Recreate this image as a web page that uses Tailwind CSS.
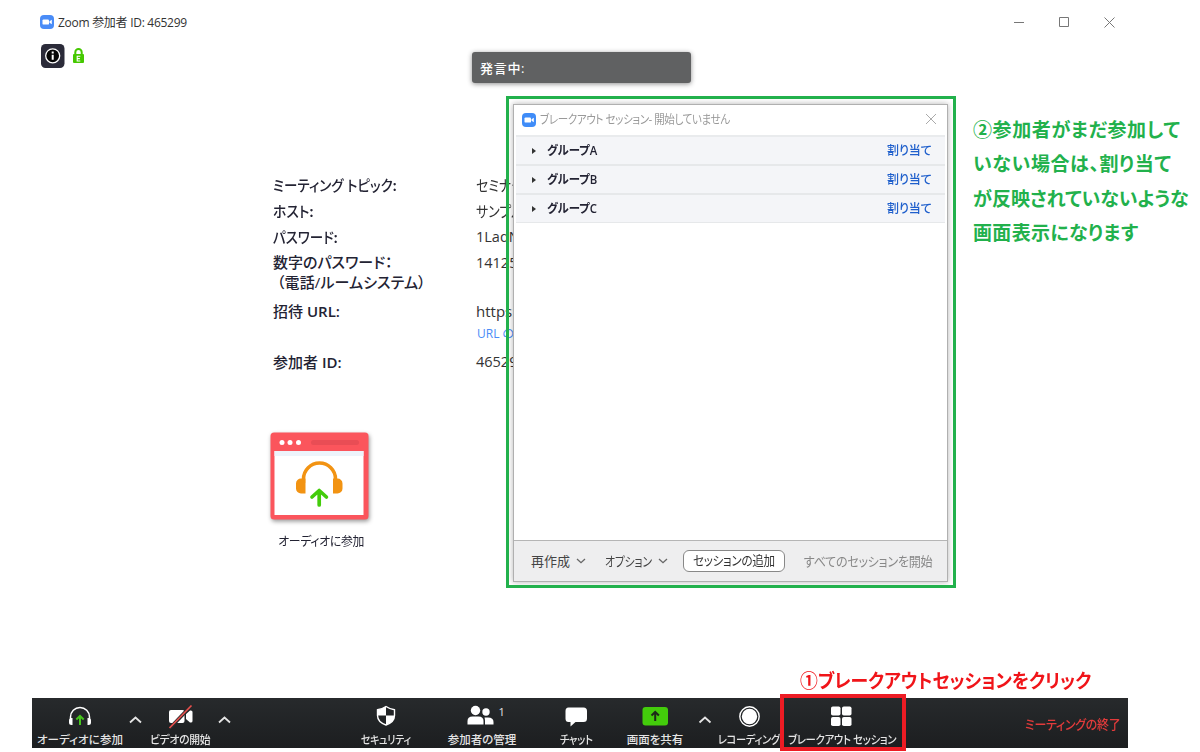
<!DOCTYPE html>
<html lang="ja">

<head>
  <meta charset="UTF-8">
  <meta name="viewport" content="width=device-width, initial-scale=1.0">
  <title>Zoom 参加者 ID: 465299</title>
  <script src="https://cdn.jsdelivr.net/npm/@tailwindcss/browser@4"></script>
</head>

<body class="relative flex h-[752px] w-[1200px] flex-col overflow-hidden bg-white font-['Open_Sans','Noto_Sans_CJK_JP',sans-serif] text-[#232333] whitespace-nowrap [font-feature-settings:'palt']">

  <!-- Window title bar -->
  <header class="flex h-[44px] items-center pl-10 pr-[85px]">
    <svg class="h-[14px] w-[14px]" viewBox="0 0 14 14">
      <rect width="14" height="14" rx="4" fill="#4a8cf7" />
      <rect x="2.5" y="4.4" width="6.5" height="5.2" rx="1.2" fill="#fff" />
      <path d="M9.5 6.3l2.3-1.6v4.6L9.5 7.7z" fill="#fff" />
    </svg>
    <h1 class="ml-1 pt-[2px] text-[12px] leading-4 tracking-[-0.28px] text-[#333]">Zoom 参加者 ID: 465299</h1>
    <svg class="ml-auto h-[12px] w-[102px]" viewBox="0 0 102 12" fill="none" stroke="#777" stroke-width="1">
      <path d="M1 6.5h10M46.5 1.5h9v9h-9zM91.5 1.5l10 10m0-10l-10 10" />
    </svg>
  </header>

  <!-- Info / encryption badges and the active speaker bar -->
  <div class="flex h-[40px] items-start pl-[41px]">
    <svg class="h-[24px] w-[24px]" viewBox="0 0 24 24">
      <rect width="23.5" height="24" rx="4.5" fill="#2b2b39" />
      <circle cx="11.7" cy="11.8" r="7" fill="#050505" stroke="#fff" stroke-width="1.3" />
      <path d="M11.7 7.6v1.9M11.7 10.7v5" stroke="#fff" stroke-width="2" />
    </svg>
    <svg class="mt-[4px] ml-[8px] h-[15px] w-[11px]" viewBox="0 0 11 15">
      <path d="M2.3 7V4.3a3.2 3.2 0 0 1 6.4 0V7" fill="none" stroke="#45c800" stroke-width="2" />
      <rect y="6" width="11" height="9" rx="1" fill="#45c800" />
      <path d="M7.3 8.2H4.2v4.8h3.1M4.2 10.6h2.700" fill="none" stroke="#fff" stroke-width="1.100" />
    </svg>
    <div class="mt-[8px] ml-[388px] flex h-[31px] w-[219px] items-center rounded-[3px] bg-[#606162] pt-[2px] pl-2 text-[13px] font-medium text-white shadow-[0_1px_5px_rgba(0,0,0,0.45)]">
      <span class="tracking-[0.7px]">発言中:</span>
    </div>
  </div>

  <!-- Meeting information -->
  <dl class="mt-[88px] ml-[273px] grid grid-cols-[203px_auto] justify-start text-[15px] leading-[26px]">
    <dt class="origin-left scale-x-[0.9] font-medium">ミーティング トピック<b>:</b></dt>
    <dd class="origin-left scale-x-[0.86] text-[#333]">セミナー</dd>
    <dt class="origin-left scale-x-[0.92] font-medium">ホスト<b>:</b></dt>
    <dd class="origin-left scale-x-[0.86] text-[#333]">サンプル</dd>
    <dt class="origin-left scale-x-[0.9] font-medium">パスワード<b>:</b></dt>
    <dd class="text-[14.5px] text-[#333]">1LadNw</dd>
    <dt class="pt-[2px] font-medium leading-[20px]">数字のパスワード：<br><span class="ml-[4px] tracking-[0.1px]">（電話/ルームシステム）</span></dt>
    <dd class="text-[14.5px] text-[#333]">141256</dd>
    <dt class="mt-[6px] font-medium">招待 <b class="font-semibold">URL:</b></dt>
    <dd class="mt-[6px] text-[#333]">https://zoom.us
      <span class="block pl-[1px] text-[12px] leading-[20px] text-[#4a8cf7]">URL のコピー</span>
    </dd>
    <dt class="mt-[5px] font-medium">参加者 <b class="font-semibold">ID:</b></dt>
    <dd class="mt-[5px] text-[14.5px] text-[#333]">465299</dd>
  </dl>

  <!-- Join audio -->
  <div class="mt-[57px] ml-[270px] flex w-[100px] flex-col items-center">
    <svg class="h-[89px] w-[100px] drop-shadow-[1px_2px_2px_rgba(0,0,0,0.4)]" viewBox="0 0 100 89">
      <rect x="0.5" y="0.5" width="98" height="87" rx="3.5" fill="#fb555c" />
      <rect x="4.5" y="19" width="89" height="64" fill="#fff" />
      <rect x="4.5" y="19" width="89" height="5" fill="#edf4fb" />
      <g fill="#fff">
        <circle cx="12" cy="10.5" r="2.5" />
        <circle cx="20" cy="10.5" r="2.5" />
        <circle cx="28.5" cy="10.5" r="2.5" />
      </g>
      <rect x="41" y="8" width="48" height="5" rx="2.5" fill="#e94d55" />
      <path d="M33.5 51V47a16 16 0 0 1 32 0v4" fill="none" stroke="#f29312" stroke-width="3.5" />
      <path d="M35.5 46.5v15H31a5 5 0 0 1-5-5v-5a5 5 0 0 1 5-5zM63 46.5v15h4.5a5 5 0 0 0 5-5v-5a5 5 0 0 0-5-5z" fill="#f29312" />
      <path d="M49.2 73V59.5M42 65l7.2-6.5 7.2 6.5" fill="none" stroke="#43cc0b" stroke-width="3.7" stroke-linecap="round" stroke-linejoin="round" />
    </svg>
    <p class="mt-[11px] ml-[2px] scale-x-[0.95] text-[12.5px] leading-5 tracking-[-0.3px]">オーディオに参加</p>
  </div>

  <!-- Meeting toolbar -->
  <nav class="mt-auto mb-[4px] ml-[32px] flex h-[50px] w-[1096px] bg-linear-to-b from-[#272a2c] to-[#1c1e20] text-[11.5px] font-medium leading-[14px] text-[#e4e4e4]">
    <div class="flex w-[96px] flex-col items-center pt-[6px]">
      <svg class="h-[26px] w-[28px]" viewBox="0 0 28 26" fill="none">
        <path d="M4.5 16v-3a9.5 9.5 0 0 1 19 0v3" stroke="#fff" stroke-width="1.5" />
        <path d="M6.5 14v7H5.5a2.5 2.5 0 0 1-2.5-2.5v-2A2.5 2.5 0 0 1 5.5 14zM21.5 14v7h1a2.5 2.5 0 0 0 2.5-2.5v-2a2.5 2.5 0 0 0-2.5-2.5z" fill="#fff" />
        <path d="M14 21v-9M10.3 15.5L14 12l3.7 3.5" stroke="#45c51c" stroke-width="2" />
      </svg>
      <span class="mt-[3px] tracking-[0.1px]">オーディオに参加</span>
    </div>
    <svg class="mt-[16px] h-[12px] w-[15px]" viewBox="0 0 15 12" fill="none" stroke="#e4e4e4" stroke-width="1.8">
      <path d="M2 8.5L7.5 3.5l5.5 5" />
    </svg>
    <div class="flex w-[74px] flex-col items-center pt-[6px]">
      <svg class="h-[26px] w-[28px]" viewBox="0 0 28 26">
        <rect x="3" y="6" width="15.5" height="13" rx="2" fill="#fff" />
        <path d="M20 10l4-3.5q2.5-.5 2.5 1.5v9q0 2-2.5 1.5L20 15z" fill="#fff" />
        <path d="M4 24L25 2" stroke="#27292b" stroke-width="3.5" />
        <path d="M3.5 24L25.5 1.5" stroke="#e8504d" stroke-width="1.7" />
      </svg>
      <span class="mt-[3px] scale-x-[0.94] tracking-[-0.3px]">ビデオの開始</span>
    </div>
    <svg class="mt-[16px] h-[12px] w-[15px]" viewBox="0 0 15 12" fill="none" stroke="#e4e4e4" stroke-width="1.8">
      <path d="M2 8.5L7.5 3.5l5.5 5" />
    </svg>

    <div class="ml-[108px] flex w-[92px] flex-col items-center pt-[6px]">
      <svg class="h-[26px] w-[28px]" viewBox="0 0 28 26">
        <path d="M14 2.5q4 2.7 8.5 3.3v5.7q0 6.5-8.5 9.5q-8.5-3-8.5-9.5V5.8Q10 5.2 14 2.5z" fill="#222426" stroke="#fff" stroke-width="1.4" />
        <path d="M14 2.5v9H5.5V5.8Q10 5.2 14 2.5zM14 11.5h8.5q0 6.5-8.5 9.5z" fill="#fff" />
      </svg>
      <span class="mt-[3px] scale-x-[0.87] tracking-[-0.3px]">セキュリティ</span>
    </div>
    <div class="flex w-[100px] flex-col items-center pt-[6px]">
      <svg class="h-[26px] w-[40px] overflow-visible" viewBox="0 0 40 26" fill="#fff">
        <circle cx="13.5" cy="6.500" r="4.7" />
        <path d="M5.5 20.5V17q0-4.5 5-4.5h6q5 0 5 4.5v3.5z" />
        <circle cx="24" cy="8" r="3.7" />
        <path d="M22.5 13.5h3.5q5.5 0 5.5 4.5v2.5H23V17q0-2-.5-3.5z" />
        <text x="36.500" y="11.500" font-size="11" fill="#e4e4e4">1</text>
      </svg>
      <span class="mt-[3px]">参加者の管理</span>
    </div>
    <div class="flex w-[88px] flex-col items-center pt-[6px]">
      <svg class="h-[26px] w-[28px]" viewBox="0 0 28 26">
        <path d="M6.5 3.5h15q3.5 0 3.5 3.5v7.5q0 3.5-3.5 3.5H13.5L8.5 22.5V18h-2Q3.5 18 3.5 14.5V7q0-3.5 3-3.5z" fill="#fff" />
      </svg>
      <span class="mt-[3px] scale-x-[0.9] tracking-[-0.3px]">チャット</span>
    </div>
    <div class="flex w-[70px] flex-col items-center pt-[6px]">
      <svg class="h-[26px] w-[28px]" viewBox="0 0 28 26">
        <rect x="1.5" y="3" width="25.5" height="18.5" rx="3" fill="#43cc0b" />
        <path d="M14.2 17V8.5M10.5 11.5l3.7-3.5 3.7 3.5" fill="none" stroke="#1d2a18" stroke-width="2" />
      </svg>
      <span class="mt-[3px]">画面を共有</span>
    </div>
    <svg class="mt-[16px] h-[12px] w-[30px]" viewBox="0 0 30 12" fill="none" stroke="#e4e4e4" stroke-width="1.8">
      <path d="M9.500 8.500L15 3.500l5.500 5" />
    </svg>
    <div class="flex w-[58px] flex-col items-center pt-[6px]">
      <svg class="h-[26px] w-[28px]" viewBox="0 0 28 26">
        <circle cx="14.5" cy="12.5" r="9.7" fill="none" stroke="#fff" stroke-width="1.4" />
        <circle cx="14.5" cy="12.5" r="7.7" fill="#fff" />
      </svg>
      <span class="mt-[3px] scale-x-[0.89] tracking-[-0.3px]">レコーディング</span>
    </div>
    <div class="flex w-[126px] flex-col items-center pt-[6px]">
      <svg class="h-[26px] w-[28px]" viewBox="0 0 28 26" fill="#fff">
        <rect x="4" y="2.5" width="9.5" height="9" rx="1.8" />
        <rect x="15" y="2.5" width="9.5" height="9" rx="1.8" />
        <rect x="4" y="13" width="9.5" height="9" rx="1.8" />
        <rect x="15" y="13" width="9.5" height="9" rx="1.8" />
      </svg>
      <span class="mt-[3px] ml-[2px] scale-x-[0.9] tracking-[-0.3px]">ブレークアウト セッション</span>
    </div>
    <span class="ml-auto origin-right scale-x-[0.92] self-center pt-[2px] pr-[8px] text-[13px] tracking-[-0.3px] text-[#e23b3b]">ミーティングの終了</span>
  </nav>

  <!-- Breakout session window -->
  <section class="absolute top-[104px] left-[513px] flex h-[478px] w-[435px] flex-col border border-[#b0b0b0] bg-white shadow-[0_0_6px_rgba(0,0,0,0.3)]">
    <div class="flex h-[30px] items-center pl-[8px] pr-[10px]">
      <svg class="mb-[1px] h-[14px] w-[14px]" viewBox="0 0 14 14">
        <rect width="14" height="14" rx="4" fill="#3f8cf8" />
        <rect x="2.5" y="4.4" width="6.5" height="5.2" rx="1.2" fill="#fff" />
        <path d="M9.5 6.3l2.3-1.6v4.6L9.5 7.7z" fill="#fff" />
      </svg>
      <h2 class="ml-[4px] origin-left scale-x-[0.875] text-[12px] tracking-[-0.4px] text-[#999]">ブレークアウト セッション- 開始していません</h2>
      <svg class="mb-[2px] ml-auto h-[12px] w-[12px]" viewBox="0 0 12 12" stroke="#aaa" stroke-width="1">
        <path d="M1 1l10 10M11 1L1 11" />
      </svg>
    </div>
    <ul class="mx-[2px] text-[12.5px] font-semibold">
      <li class="flex h-[29px] items-center border-t-2 border-[#e9ebed] bg-[#f4f5f8] pl-[16px] pr-[13px]">
        <svg class="h-[6px] w-[4px]" viewBox="0 0 4 6"><path d="M0 0l4 3-4 3z" fill="#333" /></svg>
        <span class="ml-[11px] origin-left scale-x-[0.91] pt-[2px]">グループA</span>
        <a href="#" class="ml-auto origin-right scale-x-[0.96] pt-[2px] font-medium text-[#1f5fcc]">割り当て</a>
      </li>
      <li class="flex h-[29px] items-center border-t-2 border-[#e6e8ea] bg-[#f4f5f8] pl-[16px] pr-[13px]">
        <svg class="h-[6px] w-[4px]" viewBox="0 0 4 6"><path d="M0 0l4 3-4 3z" fill="#333" /></svg>
        <span class="ml-[11px] origin-left scale-x-[0.91] pt-[2px]">グループB</span>
        <a href="#" class="ml-auto origin-right scale-x-[0.96] pt-[2px] font-medium text-[#1f5fcc]">割り当て</a>
      </li>
      <li class="flex h-[30px] items-center border-t-2 border-b border-[#e6e8ea] bg-[#f4f5f8] pl-[16px] pr-[13px]">
        <svg class="h-[6px] w-[4px]" viewBox="0 0 4 6"><path d="M0 0l4 3-4 3z" fill="#333" /></svg>
        <span class="ml-[11px] origin-left scale-x-[0.91] pt-[2px]">グループC</span>
        <a href="#" class="ml-auto origin-right scale-x-[0.96] pt-[2px] font-medium text-[#1f5fcc]">割り当て</a>
      </li>
    </ul>
    <footer class="mt-auto flex h-[41px] items-center border-t border-[#b5b5b5] bg-[#eeeeef] pl-[17px] pr-[15px] text-[13px] text-[#444]">
      <span class="pt-[2px]">再作成</span>
      <svg class="ml-[6px] h-[6px] w-[10px]" viewBox="0 0 10 6" fill="none" stroke="#666" stroke-width="1.3"><path d="M1 1l4 3.7L9 1" /></svg>
      <span class="-mr-[9px] ml-[19px] origin-left scale-x-[0.84] pt-[2px] tracking-[-0.3px]">オプション</span>
      <svg class="ml-[6px] h-[6px] w-[10px]" viewBox="0 0 10 6" fill="none" stroke="#666" stroke-width="1.3"><path d="M1 1l4 3.7L9 1" /></svg>
      <button class="ml-auto flex h-[22px] w-[102px] shrink-0 items-center justify-center rounded-[6px] border border-[#888] bg-white text-[#333]">
        <span class="scale-x-[0.89] tracking-[-0.3px]">セッションの追加</span>
      </button>
      <span class="ml-[9px] origin-right scale-x-[0.93] pt-[2px] tracking-[-0.3px] text-[#888]">すべてのセッションを開始</span>
    </footer>
  </section>

  <!-- Annotations -->
  <div class="absolute top-[96px] left-[506px] h-[492px] w-[450px] border-3 border-[#22b14c]"></div>
  <p class="absolute top-[113px] left-[973px] text-[19px] font-bold leading-[34.3px] text-[#22b14c]">
    <span class="tracking-[0.6px]">②参加者がまだ参加して</span><br>
    <span class="tracking-[0.6px]">いない場合は、割り当て</span><br>
    が反映されていないような<br>
    <span class="tracking-[0.35px]">画面表示になります</span>
  </p>
  <div class="absolute top-[694px] left-[780px] h-[57px] w-[126px] border-4 border-[#ed1c24]"></div>
  <p class="absolute top-[667px] left-[800px] origin-left scale-x-[0.938] text-[19px] font-bold leading-7 text-[#f01419]">①ブレークアウトセッションをクリック</p>
</body>

</html>
